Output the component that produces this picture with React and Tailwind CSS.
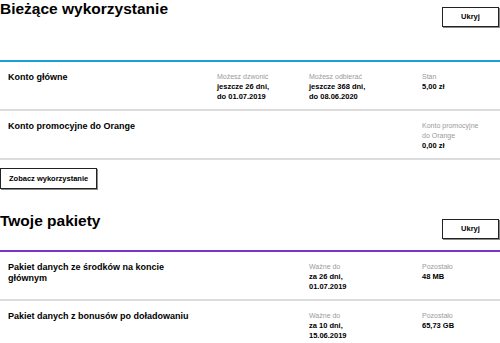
const Label = ({ children }) => (
  <div className="text-[7px] leading-[10px] text-[#9a9a9a]">{children}</div>
);

const Value = ({ children }) => (
  <div className="text-[7.5px] leading-[10px] font-bold text-black">{children}</div>
);

const Row = ({ title, cols }) => (
  <div className="grid grid-cols-[209px_92px_113px_78px] pl-[8px] pt-[10px] pb-[7px] border-b-2 border-[#dcdcdc]">
    <div className="pr-[18px] text-[9px] leading-[11px] font-bold text-black">{title}</div>
    {cols.map((c, i) => (
      <div key={i} className={i === 2 ? "pr-[14px]" : "pr-[4px]"}>
        {c && (
          <>
            <Label>{c.label}</Label>
            {c.values.map((v) => (
              <Value key={v}>{v}</Value>
            ))}
          </>
        )}
      </div>
    ))}
  </div>
);

const HideButton = () => (
  <button className="mt-[7px] w-[57px] h-[20px] mr-[1px] border border-[#222] shadow-[1px_1px_0_#8a8a8a] bg-white text-[7.5px] font-bold text-black">
    Ukryj
  </button>
);

export default function App() {
  return (
    <div className="w-[500px] h-[343px] overflow-hidden bg-white font-['Liberation_Sans',Arial,sans-serif]">
      {/* Bieżące wykorzystanie */}
      <div className="flex justify-between items-start h-[60px]">
        <h1 className="text-[15.5px] leading-[18px] font-bold text-black">Bieżące wykorzystanie</h1>
        <HideButton />
      </div>
      <div className="h-[2px] bg-[#1e9ed9]" />
      <Row
        title="Konto główne"
        cols={[
          { label: "Możesz dzwonić", values: ["jeszcze 26 dni,", "do 01.07.2019"] },
          { label: "Możesz odbierać", values: ["jeszcze 368 dni,", "do 08.06.2020"] },
          { label: "Stan", values: ["5,00 zł"] },
        ]}
      />
      <Row
        title="Konto promocyjne do Orange"
        cols={[
          null,
          null,
          { label: "Konto promocyjne do Orange", values: ["0,00 zł"] },
        ]}
      />
      <button className="mt-[8px] h-[21px] px-[8px] border border-[#222] shadow-[1px_1px_0_#8a8a8a] bg-white text-[7.5px] font-bold text-black">
        Zobacz wykorzystanie
      </button>

      {/* Twoje pakiety */}
      <div className="flex justify-between items-start h-[38px] mt-[23px]">
        <h2 className="text-[15.5px] leading-[18px] font-bold text-black">Twoje pakiety</h2>
        <HideButton />
      </div>
      <div className="h-[2px] bg-[#7435c8]" />
      <Row
        title="Pakiet danych ze środków na koncie głównym"
        cols={[
          null,
          { label: "Ważne do", values: ["za 26 dni,", "01.07.2019"] },
          { label: "Pozostało", values: ["48 MB"] },
        ]}
      />
      <Row
        title="Pakiet danych z bonusów po doładowaniu"
        cols={[
          null,
          { label: "Ważne do", values: ["za 10 dni,", "15.06.2019"] },
          { label: "Pozostało", values: ["65,73 GB"] },
        ]}
      />
    </div>
  );
}
